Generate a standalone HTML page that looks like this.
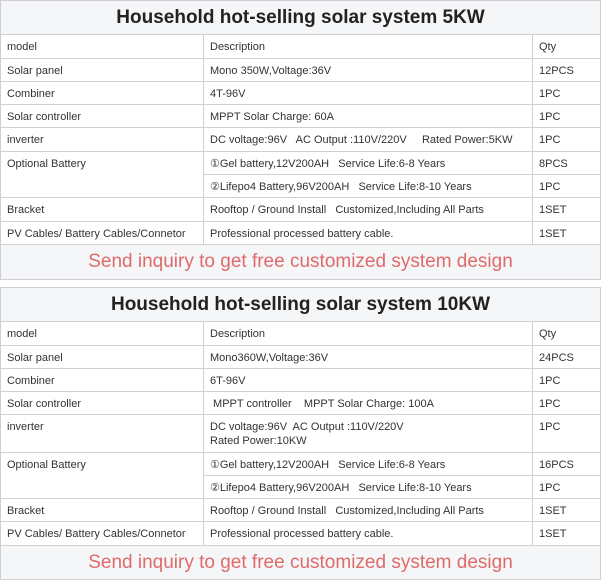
<!DOCTYPE html>
<html><head><meta charset="utf-8"><style>
body{margin:0;background:#fff;font-family:"Liberation Sans",Arial,sans-serif;}
table{position:absolute;left:0;width:600px;border-collapse:collapse;table-layout:fixed;}
td{border:1px solid #cfcfd2;font-size:11px;color:#333;padding:5px 0 0 6px;vertical-align:top;line-height:14px;background:#fff;white-space:nowrap;overflow:hidden;}
td.t{background:#f5f6f8;text-align:center;font-weight:bold;font-size:19px;color:#222;padding:0;vertical-align:middle;}
td.s{background:#f5f6f8;text-align:center;font-size:19px;color:#e06a6a;padding:0;vertical-align:middle;}
</style></head><body>
<table style="top:0">
<colgroup><col style="width:203px"><col style="width:329px"><col style="width:68px"></colgroup>
<tr style="height:34px"><td class="t" colspan="3">Household hot-selling solar system 5KW</td></tr>
<tr style="height:24px"><td>model</td><td>Description</td><td>Qty</td></tr>
<tr style="height:23px"><td>Solar panel</td><td>Mono 350W,Voltage:36V</td><td>12PCS</td></tr>
<tr style="height:23px"><td>Combiner</td><td>4T-96V</td><td>1PC</td></tr>
<tr style="height:23px"><td>Solar controller</td><td>MPPT Solar Charge: 60A</td><td>1PC</td></tr>
<tr style="height:24px"><td>inverter</td><td>DC voltage:96V&nbsp;&nbsp; AC Output :110V/220V&nbsp;&nbsp;&nbsp;&nbsp; Rated Power:5KW</td><td>1PC</td></tr>
<tr style="height:23px"><td rowspan="2">Optional Battery</td><td>①Gel battery,12V200AH&nbsp;&nbsp; Service Life:6-8 Years</td><td>8PCS</td></tr>
<tr style="height:23px"><td>②Lifepo4 Battery,96V200AH&nbsp;&nbsp; Service Life:8-10 Years</td><td>1PC</td></tr>
<tr style="height:24px"><td>Bracket</td><td>Rooftop / Ground Install&nbsp;&nbsp; Customized,Including All Parts</td><td>1SET</td></tr>
<tr style="height:23px"><td>PV Cables/ Battery Cables/Connetor</td><td>Professional processed battery cable.</td><td>1SET</td></tr>
<tr style="height:35px"><td class="s" colspan="3">Send inquiry to get free customized system design</td></tr>
</table>
<table style="top:287px">
<colgroup><col style="width:203px"><col style="width:329px"><col style="width:68px"></colgroup>
<tr style="height:34px"><td class="t" colspan="3">Household hot-selling solar system 10KW</td></tr>
<tr style="height:24px"><td>model</td><td>Description</td><td>Qty</td></tr>
<tr style="height:23px"><td>Solar panel</td><td>Mono360W,Voltage:36V</td><td>24PCS</td></tr>
<tr style="height:23px"><td>Combiner</td><td>6T-96V</td><td>1PC</td></tr>
<tr style="height:23px"><td>Solar controller</td><td>&nbsp;MPPT controller&nbsp;&nbsp;&nbsp; MPPT Solar Charge: 100A</td><td>1PC</td></tr>
<tr style="height:38px"><td>inverter</td><td>DC voltage:96V&nbsp; AC Output :110V/220V<br>Rated Power:10KW</td><td>1PC</td></tr>
<tr style="height:23px"><td rowspan="2">Optional Battery</td><td>①Gel battery,12V200AH&nbsp;&nbsp; Service Life:6-8 Years</td><td>16PCS</td></tr>
<tr style="height:23px"><td>②Lifepo4 Battery,96V200AH&nbsp;&nbsp; Service Life:8-10 Years</td><td>1PC</td></tr>
<tr style="height:23px"><td>Bracket</td><td>Rooftop / Ground Install&nbsp;&nbsp; Customized,Including All Parts</td><td>1SET</td></tr>
<tr style="height:24px"><td>PV Cables/ Battery Cables/Connetor</td><td>Professional processed battery cable.</td><td>1SET</td></tr>
<tr style="height:34px"><td class="s" colspan="3">Send inquiry to get free customized system design</td></tr>
</table>
</body></html>
